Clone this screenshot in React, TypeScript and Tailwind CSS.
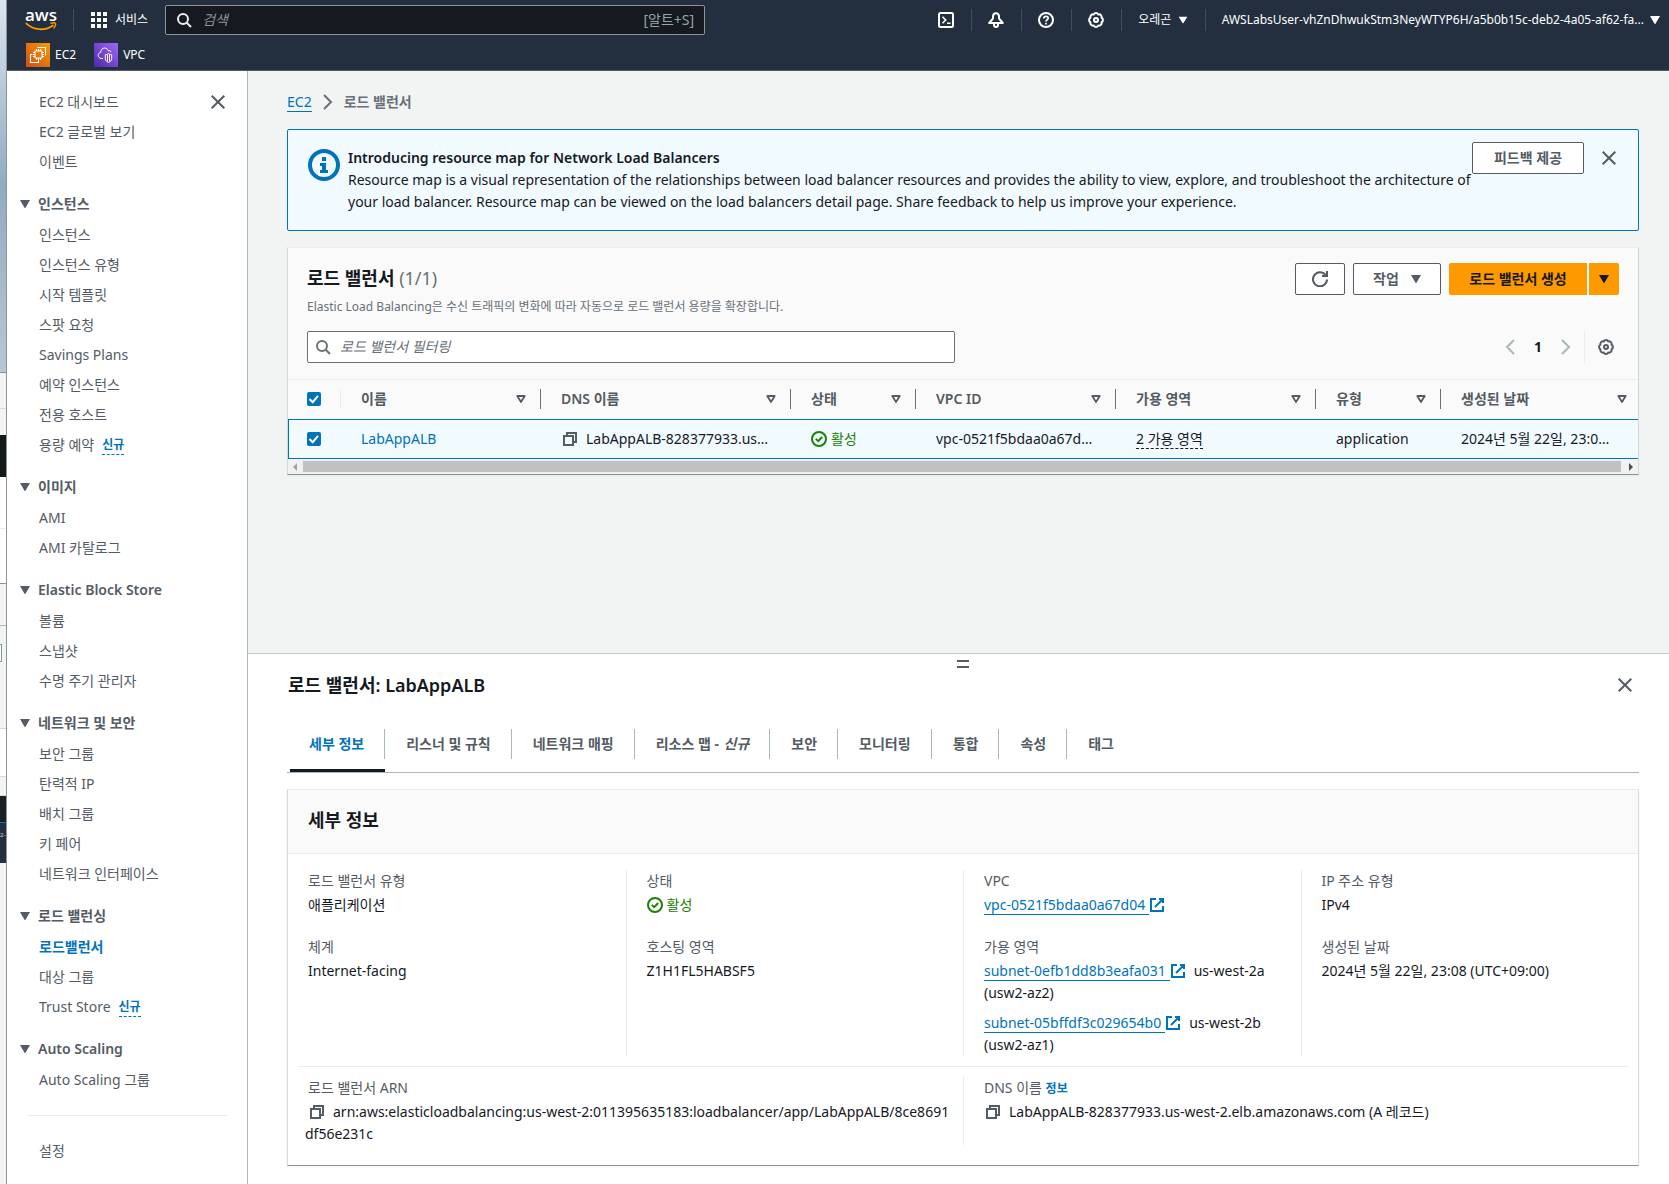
import React from "react";

type IconProps = { className?: string };

function CaretDown({ className = "" }: IconProps) {
  return (
    <svg viewBox="0 0 10 8" className={`h-2 w-2.5 shrink-0 ${className}`} fill="currentColor" aria-hidden="true">
      <path d="M0 0h10L5.6 7.4a.7.7 0 0 1-1.2 0z" />
    </svg>
  );
}

function SortIcon() {
  return (
    <svg viewBox="0 0 10 8" className="h-2 w-2.5 shrink-0" fill="none" stroke="currentColor" strokeWidth="1.8" strokeLinejoin="round" aria-hidden="true">
      <path d="M1.3 1h7.4L5 7z" />
    </svg>
  );
}

function CloseIcon() {
  return (
    <svg viewBox="0 0 16 16" className="size-4 shrink-0" stroke="currentColor" strokeWidth="2" fill="none" aria-hidden="true">
      <path d="M1.7 1.7l12.6 12.6M14.3 1.7L1.7 14.3" />
    </svg>
  );
}

function SearchIcon({ className = "" }: IconProps) {
  return (
    <svg viewBox="0 0 16 16" className={`size-4 shrink-0 ${className}`} stroke="currentColor" strokeWidth="2" fill="none" aria-hidden="true">
      <circle cx="7" cy="7" r="5" />
      <path d="M15 15l-4.5-4.5" />
    </svg>
  );
}

function GearIcon() {
  return (
    <svg viewBox="0 0 16 16" className="size-4 shrink-0" stroke="currentColor" strokeWidth="2" strokeLinejoin="round" fill="none" aria-hidden="true">
      <path d="M13.54 5.7a2.6 2.6 0 0 1 0 4.6 2.6 2.6 0 0 1-3.24 3.24 2.6 2.6 0 0 1-4.6 0 2.6 2.6 0 0 1-3.24-3.24 2.6 2.6 0 0 1 0-4.6A2.6 2.6 0 0 1 5.7 2.46a2.6 2.6 0 0 1 4.6 0 2.6 2.6 0 0 1 3.24 3.24z" />
      <circle cx="8" cy="8" r="2" />
    </svg>
  );
}

function ExternalIcon() {
  return (
    <svg viewBox="0 0 16 16" className="inline size-4 align-[-3px]" stroke="currentColor" strokeWidth="2" fill="none" aria-hidden="true">
      <path d="M7 2H2v12h12V9M10 2h4v4M6 10l7.5-7.5" />
    </svg>
  );
}

function CopyIcon() {
  return (
    <svg viewBox="0 0 16 16" className="size-4" stroke="currentColor" strokeWidth="2" fill="none" aria-hidden="true">
      <path d="M2 5h9v9H2z" />
      <path d="M5 5V2h9v9h-3" />
    </svg>
  );
}

function CopyButton() {
  return (
    <button type="button" aria-label="복사" className="inline-block align-[-3px] text-[#545b64]">
      <CopyIcon />
    </button>
  );
}

function CheckCircle() {
  return (
    <svg viewBox="0 0 16 16" className="size-4 shrink-0" stroke="currentColor" strokeWidth="2" fill="none" aria-hidden="true">
      <circle cx="8" cy="8" r="7" />
      <path d="M4.8 7.9l2.4 2.3 4-4.2" />
    </svg>
  );
}

function Active() {
  return (
    <span className="flex items-center gap-1 text-[#1d8102]">
      <CheckCircle />
      활성
    </span>
  );
}

function AwsLogo() {
  return (
    <a href="#home" aria-label="aws" className="flex h-6 w-8 flex-col items-center font-['Open_Sans',sans-serif] text-[17px] font-semibold leading-[14px] text-white">
      <span>aws</span>
      <svg viewBox="0 0 32 9" className="h-[9px] w-8" fill="none" stroke="#f90" aria-hidden="true">
        <path d="M.8 1.2C9 8.8 20 9 28.4 3.2" strokeWidth="1.8" />
        <path d="M25.4 1.4c2-.6 4.500-.8 5 0s-.4 3.200-1.700 5" strokeWidth="1.400" />
      </svg>
    </a>
  );
}

function Ec2Icon() {
  return (
    <svg viewBox="0 0 24 24" className="size-6" fill="none" stroke="#fff" strokeWidth="1.100" aria-hidden="true">
      <defs>
        <linearGradient id="ec2" x1="0" y1="1" x2="1" y2="0">
          <stop offset="0" stopColor="#c8511b" />
          <stop offset="1" stopColor="#f90" />
        </linearGradient>
      </defs>
      <path d="M0 0h24v24H0z" fill="url(#ec2)" stroke="none" />
      <rect x="9" y="8" width="7" height="7" rx=".5" />
      <path d="M10.500 8V6M12.500 8V6M14.500 8V6M10.500 17v-2M12.500 17v-2M14.500 17v-2M9 9.500H7M9 11.500H7M9 13.500H7M18 9.500h-2M18 11.500h-2M18 13.500h-2" />
      <path d="M11.500 4.500h8v8M6.500 11.500h-2v8h8v-2.500" />
    </svg>
  );
}

function VpcIcon() {
  return (
    <svg viewBox="0 0 24 24" className="size-6" fill="none" stroke="#fff" strokeLinejoin="round" aria-hidden="true">
      <defs>
        <linearGradient id="vpc" x1="0" y1="1" x2="1" y2="0">
          <stop offset="0" stopColor="#4d27a8" />
          <stop offset="1" stopColor="#a166ff" />
        </linearGradient>
      </defs>
      <path d="M0 0h24v24H0z" fill="url(#vpc)" stroke="none" />
      <path d="M9 15.500H7.500C5.300 15.300 4.200 14 4.200 12.300c0-1.700 1.200-2.700 2.600-3C6.600 7 8.400 5 10.600 5c1.900 0 3.200 1.200 3.800 2.900.9-.7 2.400-.2 2.600 1.300" />
      <path d="M14.500 10.500c1.200 1 2.200 1.200 3.200 1.200v4c0 1.700-1.400 3-3.200 3.800-1.800-.8-3.200-2.100-3.200-3.800v-4c1 0 2-.2 3.200-1.200zM13.500 11.500v7M15.500 11.500v7" />
    </svg>
  );
}

const barIcon = "flex h-[22px] w-[50px] items-center justify-center border-r border-[#414d5c]";

function TopBar() {
  return (
    <header className="h-[71px] shrink-0 border-b border-[#545b64] bg-[#232f3e] text-white">
      <div className="flex h-10 items-center">
        <div className="flex h-[22px] items-center border-r border-[#414d5c] pl-[18px] pr-4">
          <AwsLogo />
        </div>
        <button type="button" className="flex shrink-0 items-center gap-2 px-[17px] text-xs">
          <svg viewBox="0 0 16 16" className="size-4" fill="currentColor" aria-hidden="true">
            <path d="M0 0h4v4H0zM6 0h4v4H6zM12 0h4v4h-4zM0 6h4v4H0zM6 6h4v4H6zM12 6h4v4h-4zM0 12h4v4H0zM6 12h4v4H6zM12 12h4v4h-4z" />
          </svg>
          서비스
        </button>
        <label className="flex h-[30px] w-[540px] items-center rounded-xs border border-[#879596] bg-[#16191f] px-2.5">
          <SearchIcon className="text-[#eaeded]" />
          <input type="search" aria-label="검색" placeholder="검색" className="ml-2.5 min-w-0 flex-1 text-sm outline-none placeholder:italic placeholder:text-[#879596]" />
          <span className="text-sm text-[#95a5a6]">[알트+S]</span>
        </label>
        <div className="ml-auto flex items-center">
          <button type="button" aria-label="CloudShell" className={barIcon}>
            <svg viewBox="0 0 16 16" className="size-4" fill="none" stroke="currentColor" strokeWidth="2" aria-hidden="true">
              <rect x="1" y="1" width="14" height="14" rx="1.500" />
              <path d="M4.500 4.800L7.700 8l-3.200 3.200M9 11.200h3.500" strokeWidth="1.600" />
            </svg>
          </button>
          <button type="button" aria-label="알림" className={barIcon}>
            <svg viewBox="0 0 16 16" className="size-4" fill="none" stroke="currentColor" strokeWidth="2" strokeLinejoin="round" aria-hidden="true">
              <path d="M8 1.200C6.200 1.200 5 2.600 5 4.500v2L1.200 11h13.600L11 6.500v-2c0-1.900-1.200-3.300-3-3.300zM6 11.500v1.300c0 1.300.8 2.200 2 2.200s2-.9 2-2.200v-1.300" />
            </svg>
          </button>
          <button type="button" aria-label="도움말" className={barIcon}>
            <svg viewBox="0 0 16 16" className="size-4" fill="none" stroke="currentColor" strokeWidth="2" aria-hidden="true">
              <circle cx="8" cy="8" r="7" />
              <path d="M5.800 6.500c0-1.300.9-2.200 2.200-2.200s2.200.8 2.200 2C10.200 7.800 8 7.700 8 9.500M8 10.800v1.700" strokeWidth="1.700" />
            </svg>
          </button>
          <button type="button" aria-label="설정" className={barIcon}>
            <GearIcon />
          </button>
          <button type="button" className="flex h-[22px] w-[84px] items-center justify-center gap-[7px] border-r border-[#414d5c] text-xs">
            오레곤 <CaretDown className="scale-90" />
          </button>
          <button type="button" className="flex items-center gap-1.5 whitespace-nowrap pl-4 pr-[9px] text-xs">
            AWSLabsUser-vhZnDhwukStm3NeyWTYP6H/a5b0b15c-deb2-4a05-af62-fa...
            <CaretDown />
          </button>
        </div>
      </div>
      <nav aria-label="즐겨찾기" className="flex items-center gap-[18px] pl-[19px] pt-[3px] text-xs">
        <a href="#ec2" className="flex items-center gap-[5px]"><Ec2Icon />EC2</a>
        <a href="#vpc" className="flex items-center gap-[5px]"><VpcIcon />VPC</a>
      </nav>
    </header>
  );
}

type NavItem = { label: string; fresh?: boolean; current?: boolean };
const navGroups: { title: string; items: NavItem[] }[] = [
  {
    title: "인스턴스",
    items: [
      { label: "인스턴스" }, { label: "인스턴스 유형" }, { label: "시작 템플릿" }, { label: "스팟 요청" },
      { label: "Savings Plans" }, { label: "예약 인스턴스" }, { label: "전용 호스트" }, { label: "용량 예약", fresh: true },
    ],
  },
  { title: "이미지", items: [{ label: "AMI" }, { label: "AMI 카탈로그" }] },
  { title: "Elastic Block Store", items: [{ label: "볼륨" }, { label: "스냅샷" }, { label: "수명 주기 관리자" }] },
  {
    title: "네트워크 및 보안",
    items: [{ label: "보안 그룹" }, { label: "탄력적 IP" }, { label: "배치 그룹" }, { label: "키 페어" }, { label: "네트워크 인터페이스" }],
  },
  {
    title: "로드 밸런싱",
    items: [{ label: "로드밸런서", current: true }, { label: "대상 그룹" }, { label: "Trust Store", fresh: true }],
  },
  { title: "Auto Scaling", items: [{ label: "Auto Scaling 그룹" }] },
];

function NavList({ items }: { items: NavItem[] }) {
  return (
    <ul className="flex flex-col gap-2 pl-8">
      {items.map((item) => (
        <li key={item.label} className="flex h-[22px] items-center gap-2">
          <a href="#nav" className={item.current ? "font-bold text-[#0073bb]" : ""}>{item.label}</a>
          {item.fresh && (
            <a href="#new" className="border-b border-dashed border-[#0073bb] text-xs font-bold leading-[18px] text-[#0073bb]">신규</a>
          )}
        </li>
      ))}
    </ul>
  );
}

function SideNav() {
  return (
    <nav aria-label="EC2" className="relative w-[241px] shrink-0 border-r border-[#aab7b8] bg-white pb-5 pt-5 text-[#545b64]">
      <button type="button" aria-label="닫기" className="absolute right-[21px] top-[23px]">
        <CloseIcon />
      </button>
      <NavList items={[{ label: "EC2 대시보드" }, { label: "EC2 글로벌 보기" }, { label: "이벤트" }]} />
      {navGroups.map((group) => (
        <section key={group.title}>
          <h3 className="mb-[9px] mt-5 font-semibold">
            <button type="button" className="flex h-[22px] items-center gap-2 pl-[13px]">
              <CaretDown />
              {group.title}
            </button>
          </h3>
          <NavList items={group.items} />
        </section>
      ))}
      <hr className="mb-6 ml-5 mr-5 mt-6 border-[#eaeded]" />
      <NavList items={[{ label: "설정" }]} />
    </nav>
  );
}

function DesktopEdge() {
  return (
    <div aria-hidden="true" className="flex w-[7px] shrink-0 flex-col border-r border-[#8d9396] bg-[#f2f3f3]">
      <div className="h-[373px] shrink-0 border-b border-[#879596] bg-linear-to-b from-[#dbe5ee] via-[#8fabc5] to-[#b9c6d3]" />
      <div className="h-9 shrink-0 border-b border-[#d5dbdb]" />
      <div className="h-[26px] shrink-0" />
      <div className="h-[42px] shrink-0 bg-[#16191a]" />
      <div className="h-[52px] shrink-0 border-b border-[#eaeded] bg-white" />
      <div className="h-[55px] shrink-0 border-b border-[#879596] bg-white" />
      <div className="h-[42px] shrink-0 border-b border-[#aab7b8]" />
      <div className="h-[18px] shrink-0" />
      <div className="mr-1 h-[18px] shrink-0 border-y border-r border-[#879596] bg-white" />
      <div className="h-[67px] shrink-0 border-b border-[#d5dbdb]" />
      <div className="h-[47px] shrink-0 bg-white" />
      <div className="h-5 shrink-0 border-y border-[#d5dbdb]" />
      <div className="h-[27px] shrink-0 border-b border-[#007a8a] bg-[#1b1f21]" />
      <div className="h-10 shrink-0 bg-[#232f3e] pt-1.5 text-[6px] leading-3 text-[#d5dbdb]">2-</div>
    </div>
  );
}

const normalButton = "flex h-8 items-center justify-center rounded-xs border border-[#545b64] bg-white font-bold text-[#545b64]";

function Notice() {
  return (
    <section className="flex rounded-xs border border-[#0073bb] bg-[#f1faff] pb-[17px] pl-5 pr-[21px] pt-3">
      <svg viewBox="0 0 32 32" className="mr-2 mt-[7px] size-8 shrink-0" aria-hidden="true">
        <circle cx="16" cy="16" r="14" fill="none" stroke="#0073bb" strokeWidth="4" />
        <path d="M14 8h4v4h-4zM12 14h6v7h2v3h-8v-3h2v-4h-2z" fill="#0073bb" />
      </svg>
      <div className="flex-1 pt-[5px]">
        <h2 className="font-semibold">Introducing resource map for Network Load Balancers</h2>
        <p>
          Resource map is a visual representation of the relationships between load balancer resources and provides the ability to view, explore, and troubleshoot the architecture of
          your load balancer. Resource map can be viewed on the load balancers detail page. Share feedback to help us improve your experience.
        </p>
      </div>
      <button type="button" className={`${normalButton} w-28 shrink-0`}>피드백 제공</button>
      <button type="button" aria-label="닫기" className="ml-[17px] flex h-8 items-center text-[#545b64]">
        <CloseIcon />
      </button>
    </section>
  );
}

function Checkbox({ label }: { label: string }) {
  return (
    <span className="relative block size-3.5">
      <input type="checkbox" defaultChecked aria-label={label} className="block size-3.5 appearance-none rounded-xs bg-[#0073bb]" />
      <svg viewBox="0 0 14 14" className="pointer-events-none absolute inset-0 size-3.5" fill="none" stroke="#fff" strokeWidth="2" aria-hidden="true">
        <path d="M2.500 7l3.200 3.200 5.300-6.400" />
      </svg>
    </span>
  );
}

const columns = ["이름", "DNS 이름", "상태", "VPC ID", "가용 영역", "유형", "생성된 날짜"];

function BalancerTable() {
  return (
    <div className="overflow-hidden">
      <table className="w-full min-w-[1353px] table-fixed border-separate border-spacing-0 text-left">
        <colgroup>
          <col className="w-[53px]" />
          <col className="w-[200px]" />
          <col className="w-[250px]" />
          <col className="w-[125px]" />
          <col className="w-[200px]" />
          <col className="w-[200px]" />
          <col className="w-[125px]" />
          <col />
        </colgroup>
        <thead className="text-[#545b64]">
          <tr className="h-10">
            <th className="border-t border-[#eaeded] pb-0.5 pl-[19px] pt-0">
              <div className="flex h-5 items-center border-r border-[#eaeded]"><Checkbox label="모두 선택" /></div>
            </th>
            {columns.map((name, i) => (
              <th key={name} className="border-t border-[#eaeded] pb-0.5 pl-5 pt-0 font-semibold">
                <div className={`flex h-5 items-center justify-between pr-3.5 ${i < columns.length - 1 ? "border-r border-[#687078]" : ""}`}>
                  {name}
                  <SortIcon />
                </div>
              </th>
            ))}
          </tr>
        </thead>
        <tbody className="[&_td]:h-10 [&_td]:truncate [&_td]:border-y [&_td]:border-[#0073bb] [&_td]:bg-[#f1faff] [&_td]:py-0 [&_td]:pl-5 [&_td]:pr-5">
          <tr>
            <td className="border-l pl-[18px]!"><Checkbox label="LabAppALB 선택" /></td>
            <td><a href="#alb" className="text-[#0073bb]">LabAppALB</a></td>
            <td>
              <span className="mr-2 pl-px"><CopyButton /></span>
              LabAppALB-828377933.us…
            </td>
            <td><Active /></td>
            <td>vpc-0521f5bdaa0a67d…</td>
            <td><span className="inline-block border-b border-dashed border-[#16191f] leading-[18px]">2 가용 영역</span></td>
            <td>application</td>
            <td>2024년 5월 22일, 23:0…</td>
          </tr>
        </tbody>
      </table>
    </div>
  );
}

function Balancers() {
  return (
    <section className="mt-4 border border-b-[#879596] border-l-[#d5dbdb] border-r-[#d5dbdb] border-t-[#eaeded] bg-[#fafafa] shadow-xs">
      <div className="flex px-[19px] pt-[15px]">
        <div className="pt-px">
          <h1 className="text-lg font-bold leading-7">
            로드 밸런서 <span className="font-normal text-[#687078]">(1/1)</span>
          </h1>
          <p className="mt-[5px] text-xs leading-5 text-[#687078]">Elastic Load Balancing은 수신 트래픽의 변화에 따라 자동으로 로드 밸런서 용량을 확장합니다.</p>
        </div>
        <div className="ml-auto flex gap-2">
          <button type="button" aria-label="새로 고침" className={`${normalButton} w-[50px]`}>
            <svg viewBox="0 0 16 16" className="size-4" fill="none" stroke="currentColor" strokeWidth="2" aria-hidden="true">
              <path d="M15 8.500A7 7 0 1 1 13.500 4M15 0v5h-5" />
            </svg>
          </button>
          <button type="button" className={`${normalButton} w-[88px] gap-3`}>작업 <CaretDown /></button>
          <div className="flex h-8 gap-0.5 font-bold">
            <button type="button" className="w-[138px] rounded-l-xs bg-[#f90]">로드 밸런서 생성</button>
            <button type="button" aria-label="추가 옵션" className="flex w-[30px] items-center justify-center rounded-r-xs bg-[#f90]"><CaretDown /></button>
          </div>
        </div>
      </div>
      <div className="mt-3.5 flex items-center px-[19px] pb-4">
        <label className="flex h-8 w-[648px] items-center gap-2 rounded-xs border border-[#687078] bg-white pl-[7px] pr-2 text-[#687078]">
          <SearchIcon />
          <input type="search" aria-label="로드 밸런서 필터링" placeholder="로드 밸런서 필터링" className="ml-px min-w-0 flex-1 outline-none placeholder:italic placeholder:text-[#687078]" />
        </label>
        <div className="ml-auto flex items-center">
          <button type="button" disabled aria-label="이전 페이지" className="text-[#aab7b8]">
            <svg viewBox="0 0 10 16" className="h-4 w-2.5" fill="none" stroke="currentColor" strokeWidth="2" aria-hidden="true"><path d="M9 1L2 8l7 7" /></svg>
          </button>
          <button type="button" aria-current="page" className="w-[46px] font-bold">1</button>
          <button type="button" disabled aria-label="다음 페이지" className="text-[#aab7b8]">
            <svg viewBox="0 0 10 16" className="h-4 w-2.5" fill="none" stroke="currentColor" strokeWidth="2" aria-hidden="true"><path d="M1 1l7 7-7 7" /></svg>
          </button>
          <button type="button" aria-label="기본 설정" className="ml-[13px] flex h-8 items-center border-l border-[#eaeded] pl-[13px] pr-[5px] text-[#545b64]"><GearIcon /></button>
        </div>
      </div>
      <BalancerTable />
      <div aria-hidden="true" className="flex h-[15px] items-center gap-1 bg-[#f1f1f1] px-[5px]">
        <svg viewBox="0 0 4 8" className="h-2 w-1 shrink-0 fill-[#a3a3a3]"><path d="M4 0v8L0 4z" /></svg>
        <div className="ml-0.5 mr-1 h-[11px] flex-1 bg-[#c1c1c1]" />
        <svg viewBox="0 0 4 8" className="h-2 w-1 shrink-0 fill-[#505050]"><path d="M0 0v8l4-4z" /></svg>
      </div>
    </section>
  );
}

function Field({ label, children }: { label: React.ReactNode; children: React.ReactNode }) {
  return (
    <div>
      <dt className="mb-0.5 text-[#545b64]">{label}</dt>
      <dd className="break-all">{children}</dd>
    </div>
  );
}

function ExternalLink({ children }: { children: string }) {
  return (
    <a href="#resource" className="text-[#0073bb]">
      <span className="border-b border-[#0073bb] pr-1">{children}</span>
      <ExternalIcon />
    </a>
  );
}

const tabs = ["세부 정보", "리스너 및 규칙", "네트워크 매핑", "리소스 맵 - ", "보안", "모니터링", "통합", "속성", "태그"];

function Details() {
  return (
    <section className="mt-4 border border-b-[#879596] border-l-[#d5dbdb] border-r-[#d5dbdb] border-t-[#eaeded] bg-white shadow-xs">
      <h3 className="flex h-16 items-center border-b border-[#eaeded] bg-[#fafafa] px-5 pb-1 text-lg font-bold">세부 정보</h3>
      <dl className="grid grid-cols-4 pt-4 [&>div]:flex [&>div]:flex-col [&>div]:gap-5 [&>div+div]:border-l [&>div]:border-[#eaeded] [&>div]:px-5">
        <div>
          <Field label="로드 밸런서 유형">애플리케이션</Field>
          <Field label="체계">Internet-facing</Field>
        </div>
        <div>
          <Field label="상태"><Active /></Field>
          <Field label="호스팅 영역">Z1H1FL5HABSF5</Field>
        </div>
        <div>
          <Field label="VPC"><ExternalLink>vpc-0521f5bdaa0a67d04</ExternalLink></Field>
          <Field label="가용 영역">
            <p><ExternalLink>subnet-0efb1dd8b3eafa031</ExternalLink><span className="ml-2">us-west-2a</span><br />(usw2-az2)</p>
            <p className="mt-2"><ExternalLink>subnet-05bffdf3c029654b0</ExternalLink><span className="ml-2">us-west-2b</span><br />(usw2-az1)</p>
          </Field>
        </div>
        <div>
          <Field label="IP 주소 유형">IPv4</Field>
          <Field label="생성된 날짜">2024년 5월 22일, 23:08 (UTC+09:00)</Field>
        </div>
      </dl>
      <hr className="mx-2.5 mt-2.5 border-[#eaeded]" />
      <dl className="mb-5 mt-2.5 grid grid-cols-2">
        <div className="pl-[17px] pr-2">
          <Field label={<span className="pl-[3px]">로드 밸런서 ARN</span>}>
            <span className="ml-1 mr-2"><CopyButton /></span>
            arn:aws:elasticloadbalancing:us-west-2:011395635183:loadbalancer/app/LabAppALB/8ce8691df56e231c
          </Field>
        </div>
        <div className="border-l border-[#eaeded] px-5">
          <Field label={<>DNS 이름 <a href="#info" className="text-xs font-bold text-[#0073bb]">정보</a></>}>
            <span className="ml-px mr-2"><CopyButton /></span>
            LabAppALB-828377933.us-west-2.elb.amazonaws.com (A 레코드)
          </Field>
        </div>
      </dl>
    </section>
  );
}

function SplitPanel() {
  return (
    <section className="relative border-t border-[#c2cacb] bg-white pb-[18px] pl-[39px] pr-[30px]">
      <button type="button" aria-label="패널 크기 조정" className="absolute left-1/2 top-1.5 -ml-0.5 h-2 w-3 border-y-2 border-[#545b64]" />
      <div className="flex h-[63px] items-center justify-between pb-0.5 pl-px pr-1.5">
        <h2 className="text-lg font-semibold">로드 밸런서: LabAppALB</h2>
        <button type="button" aria-label="닫기" className="text-[#545b64]"><CloseIcon /></button>
      </div>
      <div role="tablist" className="flex h-14 border-b border-[#aab7b8] pl-[3px] font-bold text-[#545b64]">
        {tabs.map((tab, i) => (
          <button
            key={tab}
            type="button"
            role="tab"
            aria-selected={i === 0}
            className={`flex flex-col ${i === 0 ? "border-b-[3px] border-[#16191f] text-[#0073bb]" : ""}`}
          >
            <span className={`mt-3 flex h-[30px] items-center whitespace-pre pr-5 ${i === 0 ? "pl-[19px]" : "pl-[21px]"} ${i < tabs.length - 1 ? "border-r border-[#aab7b8]" : ""}`}>
              {tab}
              {i === 3 && <em className="ml-px">신규</em>}
            </span>
          </button>
        ))}
      </div>
      <Details />
    </section>
  );
}

export default function App() {
  return (
    <div className="flex min-h-screen bg-[#f2f3f3] font-['Noto_Sans','Noto_Sans_CJK_KR',sans-serif] text-sm leading-[22px] text-[#16191f]">
      <DesktopEdge />
      <div className="flex min-w-0 flex-1 flex-col">
        <TopBar />
        <div className="flex flex-1">
          <SideNav />
          <main className="flex min-w-0 flex-1 flex-col">
            <div className="flex-1 pb-8 pl-[39px] pr-[30px] pt-5">
              <nav aria-label="탐색 경로" className="mb-4 flex h-[22px] items-center gap-[11px] text-[#687078]">
                <a href="#ec2" className="border-b border-[#0073bb] leading-[18px] text-[#0073bb]">EC2</a>
                <svg viewBox="0 0 10 16" className="h-4 w-2.5" fill="none" stroke="currentColor" strokeWidth="2" aria-hidden="true"><path d="M1 1l7 7-7 7" /></svg>
                <span className="font-bold">로드 밸런서</span>
              </nav>
              <Notice />
              <Balancers />
            </div>
            <SplitPanel />
          </main>
        </div>
      </div>
    </div>
  );
}
